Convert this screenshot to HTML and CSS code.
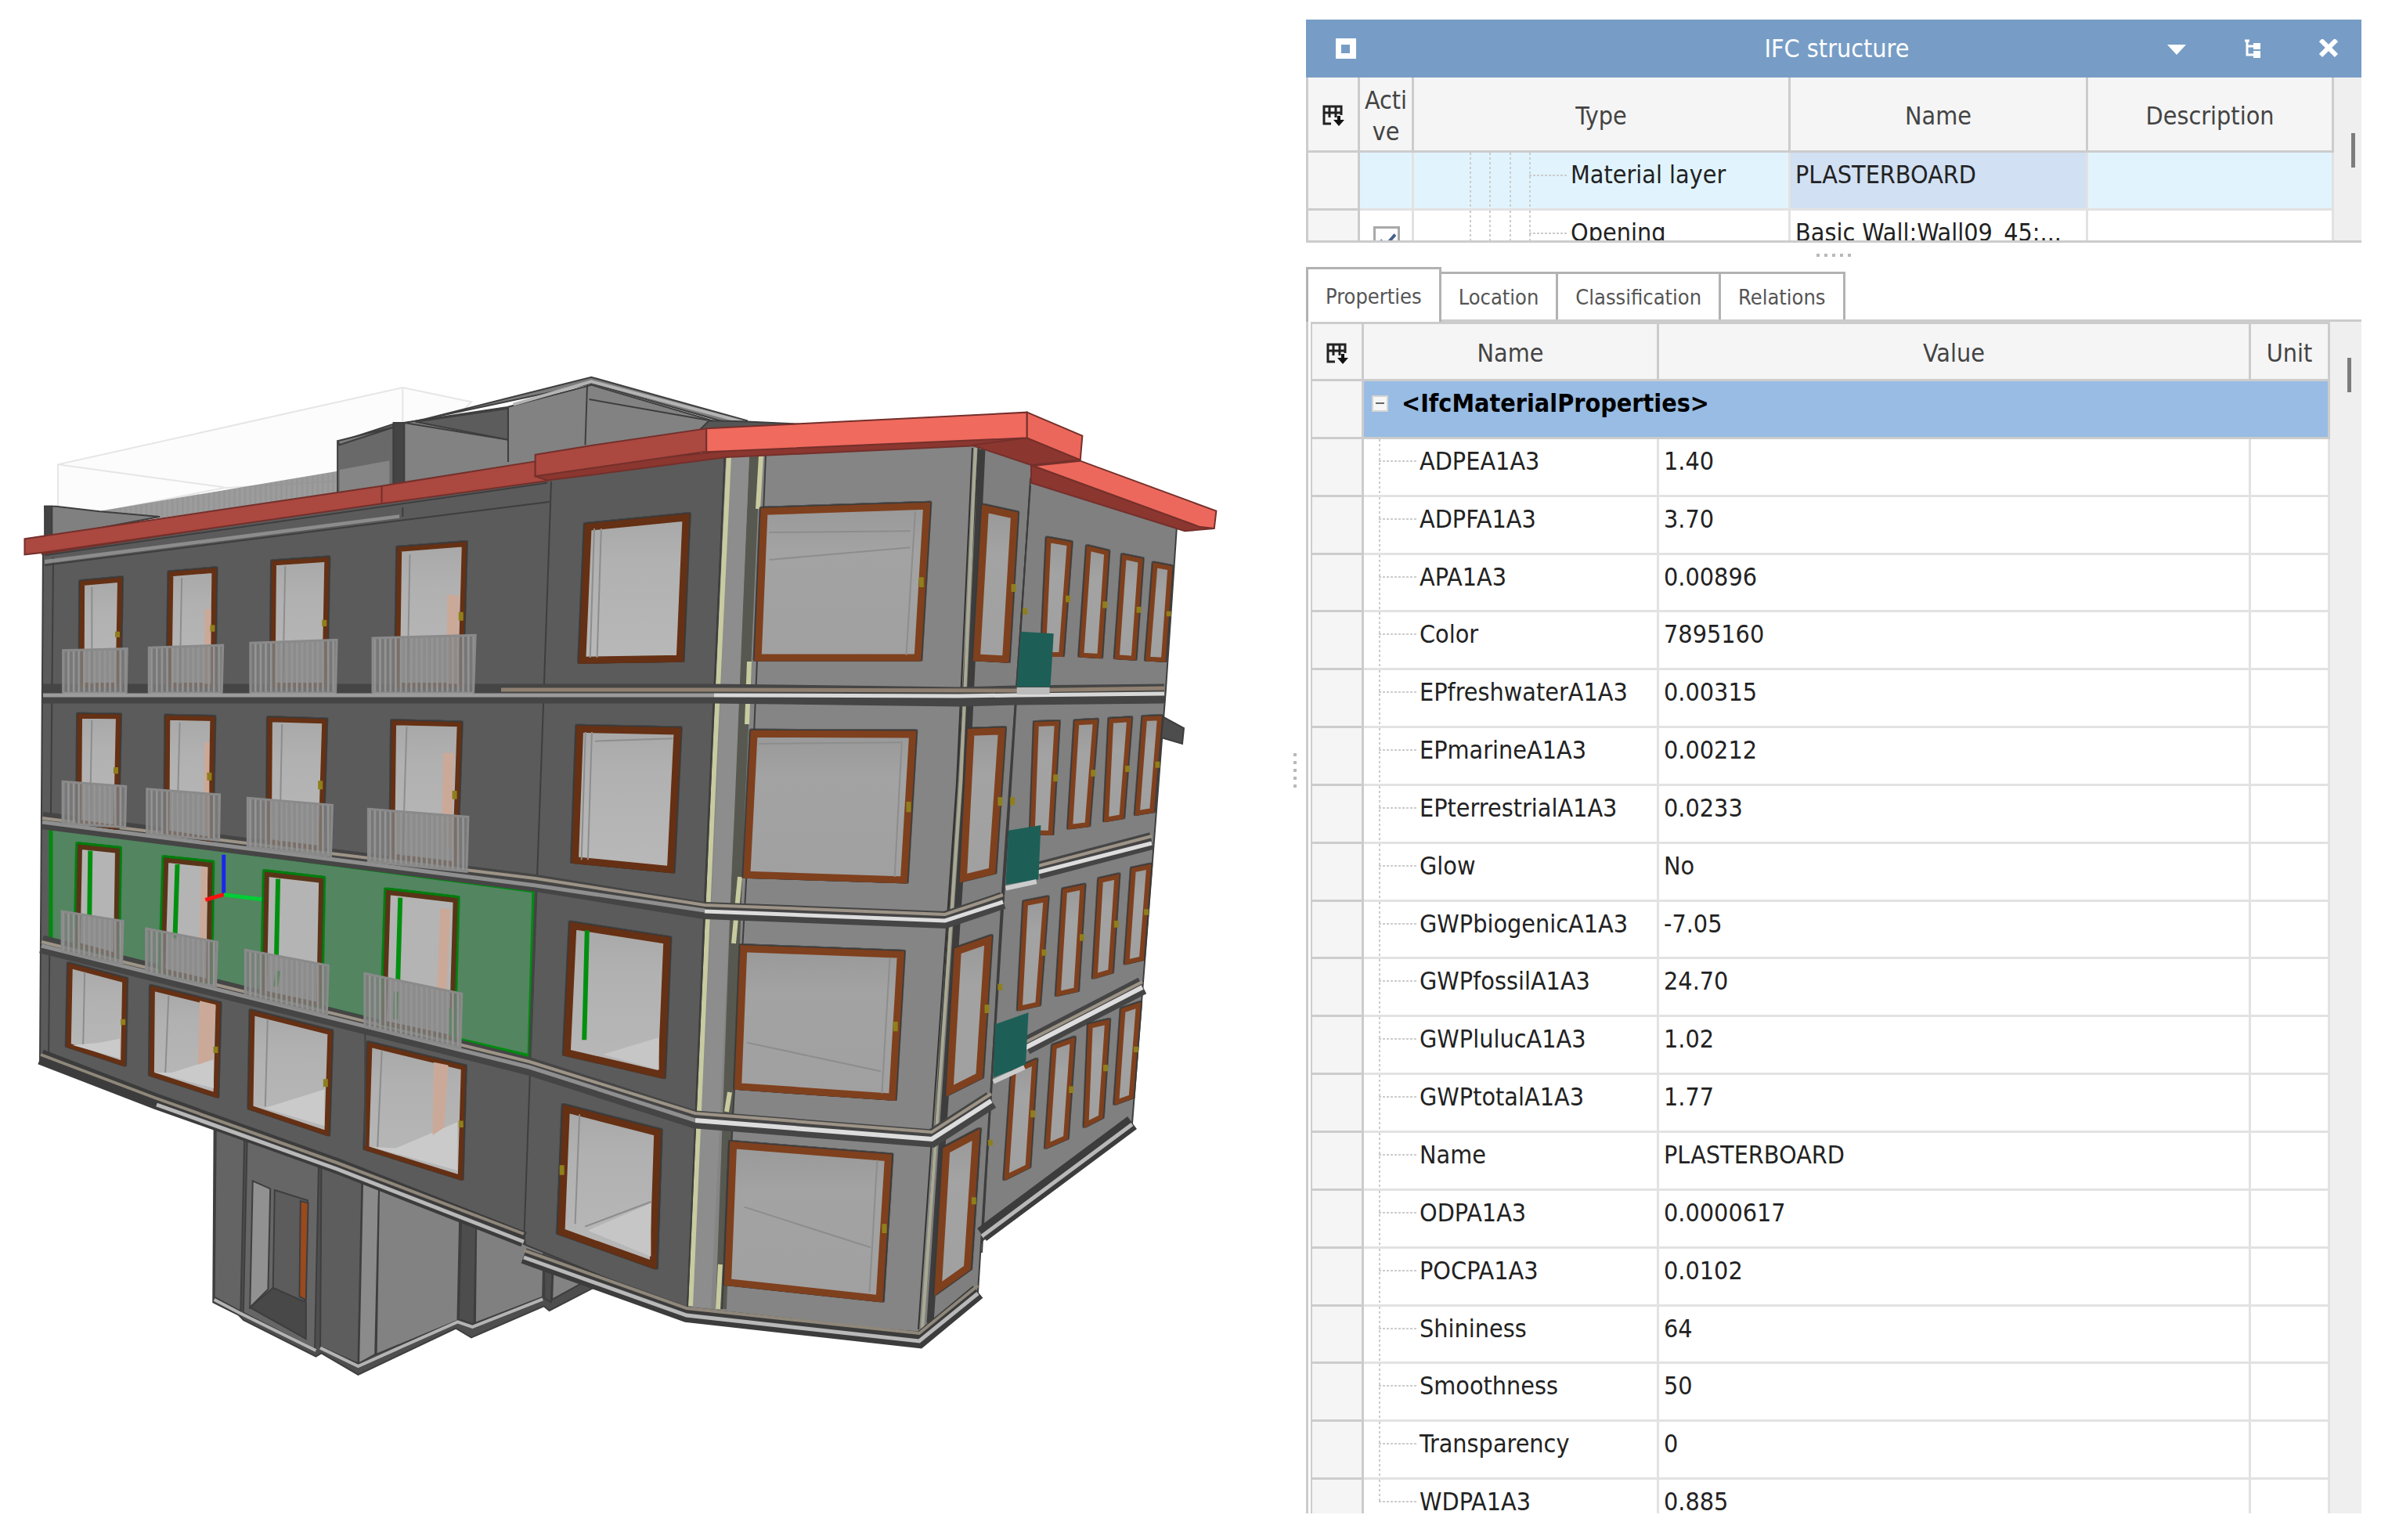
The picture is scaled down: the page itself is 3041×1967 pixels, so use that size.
FILE: index.html
```html
<!DOCTYPE html>
<html lang="en">
<head>
<meta charset="utf-8">
<title>IFC structure</title>
<link rel="stylesheet" href="styles.css">
</head>
<body>
<main class="app">
<section class="viewport" aria-label="3D model">
<svg class="model" viewBox="0 0 1640 1967" role="img" aria-label="Building model">
  <defs>
    <pattern id="bars" width="13" height="20" patternUnits="userSpaceOnUse"><rect width="13" height="20" fill="#808080" fill-opacity=".78"/><rect width="5" height="20" fill="#959595"/></pattern>
    <linearGradient id="glass" x1="0" y1="0" x2="0" y2="1"><stop offset="0" stop-color="#a8a8a8"/><stop offset=".3" stop-color="#b1b1b1"/><stop offset="1" stop-color="#b8b8b8"/></linearGradient>
    <linearGradient id="glass2" x1="0" y1="0" x2="0" y2="1"><stop offset="0" stop-color="#999"/><stop offset=".3" stop-color="#a3a3a3"/><stop offset="1" stop-color="#a0a0a0"/></linearGradient>
  </defs>

  <!-- entrance block -->
  <g class="edge" transform="translate(200 1380) scale(.7015 .3333)">
    <path fill="#4e4e4e" d="M105 170L103 850L150 900L158 918L290 1058L300 1045L367 1128L545 950L573 985L705 865L715 882L800 790L680 500L300 200Z"/>
    <path fill="#646464" d="M108 180L105 830L153 885L160 210Z"/>
    <path fill="#666" d="M165 215L158 890L288 1030L295 330Z"/>
    <path fill="#919191" d="M175 385L207 415L203 800L170 870Z"/>
    <path fill="#5c5c5c" d="M215 420L275 460L270 850L212 795Z"/>
    <path fill="#484848" d="M170 870L212 795L272 850L272 990Z"/>
    <path fill="#9a4a1c" d="M262 462L276 470L272 842L260 828Z"/>
    <path fill="#5d5d5d" d="M300 330L374 385L367 1085L298 1020Z"/>
    <path fill="#8b8b8b" d="M375 385L405 410L398 1050L368 1085Z"/>
    <path fill="#828282" d="M405 410L552 520L548 920L400 1050Z"/>
    <path fill="#4d4d4d" d="M555 520L582 540L578 935L550 915Z"/>
    <path fill="#808080" d="M582 545L705 640L703 830L580 930Z"/>
    <path fill="#4d4d4d" d="M706 700L721 720L718 850L706 835Z"/>
    <path fill="#838383" d="M722 720L785 765L720 840Z"/>
    <path class="thin" stroke="#aaa" d="M105 840L152 892L290 1035M298 1025L367 1095L548 925L575 945L703 838"/>
  </g>

  <!-- walls -->
  <g class="edge">
    <path fill="#5b5b5b" d="M55 700L694 610L708 600L926 578L900 1150L878 1675L671 1590L669 1575L51 1357Z"/>
    <path fill="#858585" d="M926 578L1250 568L1240 900L1178 1702L878 1675Z"/>
    <path fill="#7f7f7f" d="M1250 568L1318 592L1298 880L1249 1650L1178 1702Z"/>
    <path fill="#808080" d="M1316 612L1503 672L1489 880L1446 1435L1254 1585Z"/>
    <path fill="#4d4d4d" d="M1486 916L1512 930L1510 950L1483 942Z"/>
    <path d="M704 615L694 900L669 1590M68 712L62 1355M1316 620L1298 880L1280 1140L1254 1600"/>
  </g>
  <g fill="none">
    <path stroke="#575850" stroke-width="14" d="M964 582L944 1040L921 1672"/>
    <path stroke="#8d8d8d" stroke-width="24" d="M945 582L926 1040L896 1670"/>
    <path stroke="#c8cba0" stroke-width="6" d="M931 582L912 985L882 1668"/>
    <path stroke="#c8cba0" stroke-width="6" d="M972 582L968 650M957 845L954 925M945 1120L937 1205M932 1395L928 1420M920 1615L917 1672"/>
    <path stroke="#3f3f3f" stroke-width="2" d="M926 582L908 985L878 1668M978 582L961 985L922 1672"/>
    <path stroke="#3d3d3d" stroke-width="9" d="M1254 574L1234 1000L1188 1690"/>
    <path stroke="#a9a993" stroke-width="4" d="M1246 572L1227 1000L1178 1698"/>
    <path stroke="#333" stroke-width="2" d="M1242 572L1222 1000L1173 1698"/>
  </g>

  <!-- selected wall -->
  <path fill="#528560" stroke="#008b10" stroke-width="5" d="M65 1056L682 1138L676 1349L65 1206Z"/>
  <path stroke="#444" stroke-width="3" d="M685 1118L676 1365"/>

  <!-- cornices -->
  <g fill="none" class="bands">
    <path stroke="#454545" stroke-width="25" d="M55 886H910L1225 890L1298 888L1487 886"/>
    <path stroke="#8f8071" stroke-width="5" d="M640 881H912L1298 882L1487 879"/>
    <path stroke="#9c9c9c" stroke-width="5" d="M55 888H912"/>
    <path stroke="#d8d8d8" stroke-width="5" d="M912 888L1225 889L1298 888L1487 886"/>
    <path stroke="#454545" stroke-width="22" d="M54 1048L684 1128L900 1163L1207 1175L1281 1150M1326 1112L1471 1074"/>
    <path stroke="#9d9487" stroke-width="4" d="M54 1045L684 1122L900 1156L1207 1168L1281 1143M1326 1106L1471 1068"/>
    <path stroke="#8f8f8f" stroke-width="5" d="M54 1050L684 1131L900 1163"/>
    <path stroke="#ddd" stroke-width="5" d="M900 1164L1207 1176L1281 1152M1326 1114L1471 1077"/>
    <path stroke="#454545" stroke-width="23" d="M53 1206L676 1362L888 1430L1190 1454L1266 1405M1310 1336L1459 1259"/>
    <path stroke="#9d9487" stroke-width="4" d="M53 1203L676 1356L888 1422L1190 1446L1266 1397M1310 1331L1459 1254"/>
    <path stroke="#8f8f8f" stroke-width="5" d="M53 1208L676 1363L888 1431"/>
    <path stroke="#ddd" stroke-width="6" d="M888 1431L1190 1455L1266 1406M1310 1338L1459 1261"/>
    <path stroke="#3c3c3c" stroke-width="20" d="M52 1350L200 1407L430 1489L669 1583M669 1604L877 1679L1174 1712L1249 1650M1254 1577L1446 1434"/>
    <path stroke="#8f877a" stroke-width="4" d="M52 1347L200 1403L430 1485L669 1576M669 1597L877 1671L1174 1703L1249 1642"/>
    <path stroke="#b9b9b9" stroke-width="5" d="M200 1411L430 1493L669 1586M669 1606L877 1680L1174 1713L1249 1652M1254 1579L1446 1436"/>
  </g>
  <!-- roof structures -->
  <g class="edge" transform="translate(0 460) scale(.5102 .3333)">
    <path fill="#fcfcfc" stroke="#e6e6e6" d="M145 600V400L1008 105L1180 160L1000 450L560 490L260 580Z"/>
    <path fill="none" stroke="#e6e6e6" d="M145 400L560 487M1008 105V240"/>
    <path fill="url(#bars)" stroke="none" d="M250 578L845 425V510L400 605Z"/>
    <path fill="#808080" d="M112 560L140 560L250 580L400 600L120 680Z"/>
    <path fill="#444" d="M112 560H130V675H112Z"/>
    <path fill="#696969" d="M845 315L985 245V480L845 510Z"/>
    <path fill="#858585" stroke="none" d="M850 420L975 385V478L850 505Z"/>
    <path fill="#7c7c7c" d="M845 310L1480 65L1870 232L1870 262L1480 90L1020 240L850 325Z"/>
    <path fill="#828282" d="M1010 240L1270 180L1480 95L1850 262V300L1340 400L1010 480Z"/>
    <path fill="#5c5c5c" d="M1040 236L1272 185V305Z"/>
    <path fill="#444" d="M985 240H1012V475H985Z"/>
    <path fill="none" stroke="#4c4c4c" d="M1272 185V390M1470 95L1465 325M1475 150L1845 250M1012 240L1272 305"/>
    <path fill="none" class="thin" stroke="#c0c0c0" d="M1285 170L1480 82L1868 240"/>
    <path fill="#555" d="M1700 345L1775 232L1860 235L2000 245L1700 320Z"/>
    <path fill="#8c8c8c" stroke="none" d="M112 765L1000 592V605L112 780Z"/>
    <path fill="none" d="M112 786L1375 543M1008 565V600M112 748L1370 470"/>
  </g>
  <g class="roof" transform="translate(760 460) scale(.523 .3333)">
    <path fill="#8c3630" d="M-1352 743L-630 570L-140 465L0 438L320 372L930 328L1055 298L500 320L-200 430Z"/>
    <path fill="#ab4840" d="M-1393 685L-521 482L-146 388L-146 445L-114 462L-521 550L-1352 738L-1393 745Z"/>
    <path fill="#ab4840" d="M-146 362L0 325L272 262V350L0 412L-146 445Z"/>
    <path fill="#8c3630" d="M920 326L1055 298L1185 382L1065 402Z"/>
    <path fill="#8c3630" d="M1065 403L1475 630L1512 645L1440 655L1065 470Z"/>
    <path fill="#f06a5e" d="M272 262L1055 200V298L272 352Z"/>
    <path fill="#ec675b" d="M1055 200L1190 290L1185 382L1055 298Z"/>
    <path fill="#ed685c" d="M1070 405L1185 386L1517 578L1512 645L1475 638Z"/>
    <path fill="none" d="M-521 482V550"/>
  </g>

  <!-- top floor openings, street side -->
  <g transform="translate(0 460) scale(.5102 .3333)">
    <g class="win dark">
      <path d="M206 855L300 842L295 1245H205Z"/><path d="M428 820L536 806L532 1245H424Z"/>
      <path d="M686 778L818 764L812 1245H683Z"/><path d="M1000 725L1162 706L1152 1245H995Z"/>
    </g>
    <path class="jamb" d="M230 870V1240M455 835L450 1240M714 790L708 1240M1026 745L1020 1240"/>
    <path class="door" d="M513 955H528V1240H510ZM1120 900H1150L1146 1240H1118Z"/>
    <path class="bal" d="M158 1112L318 1106L316 1275H158ZM373 1102L558 1092L555 1275H373ZM627 1084L843 1072L840 1275H627ZM933 1065L1190 1054L1185 1275H933Z"/>
    <path class="knob" d="M294 1040V1062M532 1015V1040M812 995V1020M1154 965V998M1464 880V915"/>
    <path class="foot" d="M158 1280H316M373 1280H555M627 1280H840M933 1280H1185"/>
  </g>
  <!-- top floor openings, corner and side -->
  <g transform="translate(760 460) scale(.523 .3333)">
    <g class="win big dark"><path d="M-17 640L222 603L207 1144L-31 1150Z"/></g>
    <path class="jamb" d="M15 645L5 1140M-2 645L-12 1140"/>
    <g class="win big lit"><path d="M413 580L810 559L788 1140L398 1140Z"/><path d="M953 570L1024 594L1003 1146L932 1140Z"/></g>
    <path class="jamb" d="M425 660L770 655M425 765L770 718M782 580L760 1130"/>
    <g class="win lit"><path d="M1108 690L1158 704L1138 1128H1095Z"/><path d="M1206 722L1249 738L1232 1134L1188 1130Z"/><path d="M1292 755L1332 768L1315 1142L1275 1138Z"/><path d="M1368 786L1404 797L1388 1148L1350 1145Z"/></g>
    <path class="knob" d="M797 832V870M1022 858V888M1050 950V975M1155 902V928M1245 925V950M1328 945V968M1401 962V982"/>
    <path class="teal" d="M1040 1040L1120 1048L1112 1252H1030Z"/><path stroke="#bbb" stroke-width="9" d="M1030 1268H1110"/>
  </g>

  <!-- lower floors, street side -->
  <g transform="translate(0 940) scale(.5102 .3333)">
    <g class="win dark">
      <path d="M200 -76L296 -74L290 350L198 330Z"/><path d="M420 -70L532 -66L526 395L418 370Z"/>
      <path d="M676 -62L812 -56L802 430L674 405Z"/><path d="M986 -50L1150 -44L1138 490L982 460Z"/>
      <path d="M176 882L312 937L308 1255L172 1186Z"/><path d="M382 968L546 1030L540 1376L380 1296Z"/>
      <path d="M632 1062L826 1137L818 1522L628 1425Z"/><path d="M926 1184L1160 1272L1152 1692L918 1580Z"/>
    </g>
    <g class="win picked">
      <path d="M200 425L294 440L290 840L195 800Z"/><path d="M416 476L526 494L522 940L408 900Z"/>
      <path d="M668 530L804 554L798 1030L662 985Z"/><path d="M972 600L1140 630L1130 1155L962 1100Z"/>
    </g>
    <path class="jamb" d="M230 -60L225 330M450 -52L443 370M706 -45L700 405M1018 -35L1008 460M212 905L208 1190M422 995L414 1290M670 1085L664 1420M956 1205L945 1580"/>
    <path fill="#cacaca" d="M182 1185L250 1175L300 1160V1235ZM388 1290L430 1290L535 1240V1350ZM636 1415L664 1425L812 1355V1495ZM930 1575L990 1580L1145 1480V1665Z"/>
    <path class="door" d="M512 25H524V370H508ZM1110 65H1136L1130 430H1104ZM504 500L520 505L516 790H500ZM1102 660L1128 665L1118 980H1094ZM500 1015L540 1030L532 1240L495 1260ZM1086 1250L1122 1262L1112 1500L1083 1530Z"/>
    <path class="green" d="M226 440L224 690M444 492L438 775M696 548L692 840M1002 620L996 940M696 900L690 960M992 980L990 1085M1130 1045L1130 1150"/>
    <path class="bal" d="M157 175L315 193L313 350L157 335ZM368 203L550 225L548 400L368 375ZM620 238L832 265L828 460L620 425ZM922 280L1172 310L1168 520L922 480ZM155 672L308 710L305 875L155 825ZM366 738L544 790L540 962L366 905ZM614 820L822 880L818 1070L614 995ZM913 910L1156 988L1152 1195L913 1115Z"/>
    <path class="knob" d="M290 120V145M524 140V170M802 172V205M1138 210V242M1443 205V242M308 1085V1108M540 1190V1215M815 1315V1345M1154 1475V1500M1425 955V990"/>
    <g fill="none" stroke-width="5" class="axis"><path stroke="#1a26ee" d="M560 455V605"/><path stroke="#00cf35" d="M560 608L655 626"/><path stroke="#f11" d="M514 628L560 608"/></g>
    <path class="seam" d="M914 1130L914 1570"/>
  </g>

  <!-- lower floors, corner and side -->
  <g transform="translate(760 940) scale(.5102 .3333)">
    <g class="win big dark"><path d="M-38 -26L206 -18L189 512L-50 476Z"/><path d="M-55 728L180 784L166 1298L-70 1214Z"/></g>
    <path class="jamb" d="M-8 -15L-18 475M-24 -15L-34 475M0 20L195 10"/>
    <path class="green" d="M-20 745L-27 1165"/>
    <path fill="#c6c6c6" d="M20 1220L160 1155V1280Z"/>
    <g class="win big lit">
      <path d="M398 -8L795 -6L773 552L380 532Z"/><path d="M372 815L765 838L744 1384L358 1343Z"/>
      <path d="M941 -14L1018 -18L994 518L922 545Z"/><path d="M908 824L984 784L962 1303L888 1360Z"/>
    </g>
    <path class="jamb" d="M768 20L750 540M738 850L718 1370M380 1175L715 1285M410 30L770 25"/>
    <g class="win lit">
      <path d="M1105 -45L1156 -48L1140 372L1095 370Z"/><path d="M1206 -50L1252 -54L1232 340L1190 348Z"/><path d="M1292 -58L1337 -62L1318 310L1280 320Z"/><path d="M1376 -66L1413 -68L1394 286L1358 295Z"/>
      <path d="M1078 642L1128 627L1108 1028L1064 1043Z"/><path d="M1176 594L1220 580L1204 973L1160 988Z"/><path d="M1266 554L1306 540L1290 903L1252 920Z"/><path d="M1348 514L1386 502L1368 853L1332 866Z"/>
      <path d="M1048 1287L1100 1252L1083 1650L1030 1690Z"/><path d="M1150 1192L1195 1167L1178 1540L1133 1570Z"/><path d="M1240 1112L1282 1097L1266 1460L1230 1488Z"/><path d="M1322 1052L1360 1032L1342 1383L1306 1403Z"/>
    </g>
    <path class="knob" d="M785 252V292M1014 235V268M1045 235V265M1153 148V175M1247 130V155M1333 114V138M1408 98V122M1124 818V842M1219 760V785M1305 708V734M1380 664V686M1014 950V975M981 1030V1062M752 1095V1132M1192 1343V1368M1278 1260V1285M1354 1190V1212M1096 1435V1462"/>
    <path class="teal" d="M1035 362L1116 342L1110 550L1028 570ZM1002 1105L1085 1060L1078 1260L997 1310Z"/>
    <path stroke="#ccc" fill="none" stroke-width="6" d="M1028 584L1105 558M997 1325L1075 1270"/>
  </g>

  <!-- ground floor, corner -->
  <g transform="translate(200 1380) scale(.7015 .3333)">
    <g class="win big dark"><path d="M746 110L912 200L904 706L737 580Z"/></g>
    <path class="jamb" d="M770 130L762 550M780 560L900 465"/>
    <path fill="#c6c6c6" d="M785 575L900 470V675Z"/>
    <g class="win big lit"><path d="M1050 248L1332 296L1316 836L1040 773Z"/><path d="M1438 268L1492 208L1476 718L1423 798Z"/></g>
    <path class="jamb" d="M1070 485L1300 640M1312 305L1298 810"/>
    <path class="knob" d="M738 325V362M1325 550V585M1488 448V475M1518 228V250"/>
  </g>
</svg>
</section>

<div class="grip grip-v" role="separator" aria-orientation="vertical"><i></i><i></i><i></i><i></i><i></i></div>

<section class="panel" aria-label="IFC structure">
  <header class="titlebar">
    <button class="tool" type="button" aria-label="Window"><svg viewBox="0 0 26 26" width="26" height="26"><path fill="#fff" fill-rule="evenodd" d="M0 0H26V26H0ZM7 8V19H18V8Z"/></svg></button>
    <h1>IFC structure</h1>
    <div class="tools">
      <button class="tool" type="button" aria-label="Menu"><svg viewBox="0 0 24 24" width="24" height="24"><path fill="#fff" d="M0 7H24L12 20Z"/></svg></button>
      <button class="tool" type="button" aria-label="Tree"><svg viewBox="0 0 24 24" width="24" height="24"><path fill="none" stroke="#fff" stroke-width="3" d="M2 2H8M5 2V20H14M5 9H14"/><path fill="#fff" d="M13 5H22V13H13ZM13 15H22V24H13Z"/></svg></button>
      <button class="tool" type="button" aria-label="Close"><svg viewBox="0 0 24 24" width="24" height="24"><path stroke="#fff" stroke-width="6" d="M2 1L22 21M22 1L2 21"/></svg></button>
    </div>
  </header>

  <div class="pane structure">
    <table class="grid">
      <colgroup><col class="c-mark"><col class="c-active"><col class="c-type"><col class="c-name"><col></colgroup>
      <thead><tr>
        <th><button class="chooser" type="button" aria-label="Choose columns"><svg viewBox="0 0 28 29" width="28" height="29"><path fill="none" stroke="#222" stroke-width="3" d="M11 25H2V3H24V14M2 11H24M9 3V17M17 3V17"/><path fill="#111" d="M14 20H28L21 28ZM19 15H23V21H19Z"/></svg></button></th>
        <th>Acti<br>ve</th><th>Type</th><th>Name</th><th>Description</th>
      </tr></thead>
      <tbody>
        <tr class="current"><td class="mark"></td><td></td><td class="deep">Material layer</td><td class="focus">PLASTERBOARD</td><td></td></tr>
        <tr><td class="mark"></td><td class="tick"><input type="checkbox" aria-label="Active" checked></td><td class="deep">Opening</td><td>Basic Wall:Wall09_45:...</td><td></td></tr>
      </tbody>
    </table>
    <div class="scroll"><span class="thumb"></span></div>
  </div>

  <div class="grip grip-h" role="separator"><i></i><i></i><i></i><i></i><i></i></div>

  <div class="tabs" role="tablist">
    <button type="button" role="tab" aria-selected="true" class="tab on">Properties</button>
    <button type="button" role="tab" aria-selected="false" class="tab">Location</button>
    <button type="button" role="tab" aria-selected="false" class="tab">Classification</button>
    <button type="button" role="tab" aria-selected="false" class="tab">Relations</button>
  </div>

  <div class="pane props">
    <div class="clip">
    <table class="grid">
      <colgroup><col class="c-mark"><col class="c-prop"><col><col class="c-unit"></colgroup>
      <thead><tr>
        <th><button class="chooser" type="button" aria-label="Choose columns"><svg viewBox="0 0 28 29" width="28" height="29"><path fill="none" stroke="#222" stroke-width="3" d="M11 25H2V3H24V14M2 11H24M9 3V17M17 3V17"/><path fill="#111" d="M14 20H28L21 28ZM19 15H23V21H19Z"/></svg></button></th>
        <th>Name</th><th>Value</th><th>Unit</th>
      </tr></thead>
      <tbody>
        <tr class="group"><td class="mark"></td><td colspan="3"><div class="group-name"><button class="fold" type="button" aria-label="Collapse"></button>&lt;IfcMaterialProperties&gt;</div></td></tr>
        <tr><td class="mark"></td><td class="leaf">ADPEA1A3</td><td>1.40</td><td></td></tr>
        <tr><td class="mark"></td><td class="leaf">ADPFA1A3</td><td>3.70</td><td></td></tr>
        <tr><td class="mark"></td><td class="leaf">APA1A3</td><td>0.00896</td><td></td></tr>
        <tr><td class="mark"></td><td class="leaf">Color</td><td>7895160</td><td></td></tr>
        <tr><td class="mark"></td><td class="leaf">EPfreshwaterA1A3</td><td>0.00315</td><td></td></tr>
        <tr><td class="mark"></td><td class="leaf">EPmarineA1A3</td><td>0.00212</td><td></td></tr>
        <tr><td class="mark"></td><td class="leaf">EPterrestrialA1A3</td><td>0.0233</td><td></td></tr>
        <tr><td class="mark"></td><td class="leaf">Glow</td><td>No</td><td></td></tr>
        <tr><td class="mark"></td><td class="leaf">GWPbiogenicA1A3</td><td>-7.05</td><td></td></tr>
        <tr><td class="mark"></td><td class="leaf">GWPfossilA1A3</td><td>24.70</td><td></td></tr>
        <tr><td class="mark"></td><td class="leaf">GWPlulucA1A3</td><td>1.02</td><td></td></tr>
        <tr><td class="mark"></td><td class="leaf">GWPtotalA1A3</td><td>1.77</td><td></td></tr>
        <tr><td class="mark"></td><td class="leaf">Name</td><td>PLASTERBOARD</td><td></td></tr>
        <tr><td class="mark"></td><td class="leaf">ODPA1A3</td><td>0.0000617</td><td></td></tr>
        <tr><td class="mark"></td><td class="leaf">POCPA1A3</td><td>0.0102</td><td></td></tr>
        <tr><td class="mark"></td><td class="leaf">Shininess</td><td>64</td><td></td></tr>
        <tr><td class="mark"></td><td class="leaf">Smoothness</td><td>50</td><td></td></tr>
        <tr><td class="mark"></td><td class="leaf">Transparency</td><td>0</td><td></td></tr>
        <tr><td class="mark"></td><td class="leaf last">WDPA1A3</td><td>0.885</td><td></td></tr>
      </tbody>
    </table>
    </div>
    <div class="scroll"><span class="thumb"></span></div>
  </div>
</section>
</main>
</body>
</html>
```
FILE: styles.css
```css
* { box-sizing: border-box; }
body {
  margin: 0;
  background: #fff;
  color: #222;
  font: 32px/40px "DejaVu Sans Condensed", "DejaVu Sans", "Noto Sans", sans-serif;
}
button { font: inherit; color: inherit; border: 0; padding: 0; background: none; }

.app {
  display: grid;
  grid-template-columns: minmax(0, 1640fr) 28px minmax(0, 1348fr);
  height: 100vh;
  padding-right: 25px;
}
.viewport { min-height: 0; }
.model { display: block; width: 100%; height: 100%; }

/* model drawing */
.model path { vector-effect: non-scaling-stroke; }
.edge path { stroke: #3e3e3e; stroke-width: 2px; }
.edge > path:not([fill]) { fill: none; }
.edge .thin { fill: none; stroke: #b4b4b4; stroke-width: 4px; }
.edge path[stroke="#e6e6e6"] { stroke: #e6e6e6; }
.edge path[stroke="none"] { stroke: none; }
.roof path { stroke: #74302b; stroke-width: 2px; }
.win path {
  stroke-width: 6px;
  filter: drop-shadow(3px 0 0 #3a3a3a) drop-shadow(-3px 0 0 #3a3a3a) drop-shadow(0 -5px 0 #3a3a3a);
}
.win.big path { stroke-width: 9px; }
.dark path { fill: url(#glass); stroke: #653014; }
.lit path { fill: url(#glass2); stroke: #7f401e; }
.win.picked path {
  fill: #b4b4b4;
  stroke: #5a3418;
  filter: drop-shadow(5px 0 0 #007d0e) drop-shadow(-5px 0 0 #007d0e) drop-shadow(0 -9px 0 #007d0e);
}
.jamb { fill: none; stroke: #8d8d8d; stroke-width: 2px; }
.seam { stroke: #444; stroke-width: 2px; }
.door { fill: #cba999; }
.bal { fill: url(#bars); stroke: #8a8a8a; stroke-width: 3px; }
.foot { stroke: #9a9a9a; stroke-width: 3px; }
.knob { fill: none; stroke: #8f7f1c; stroke-width: 6px; }
.teal { fill: #1d5f56; }
.green { fill: none; stroke: #00900f; stroke-width: 6px; }

/* splitter grips */
.grip { display: flex; align-items: center; justify-content: center; gap: 6px; }
.grip i { width: 4px; height: 4px; background: #b9b9b9; }
.grip-v { flex-direction: column; }
.grip-h { height: 31px; }

/* panel */
.panel { display: flex; flex-direction: column; min-height: 0; padding: 25px 0 34px; }
.titlebar {
  display: grid;
  grid-template-columns: 1fr auto 1fr;
  align-items: center;
  height: 74px;
  padding: 0 30px 0 38px;
  background: #779dc6;
  color: #fff;
}
.titlebar h1 { margin: 0; font-size: 32px; font-weight: 400; }
.tool { display: flex; justify-self: start; }
.tools { display: flex; justify-content: flex-end; gap: 73px; }

.pane { display: flex; border-left: 3px solid #ccc; }
.structure { height: 211px; flex: none; overflow: hidden; border-bottom: 3px solid #ccc; }
.scroll { flex: none; width: 35px; background: #efefef; display: flex; justify-content: center; }
.thumb { width: 5px; height: 44px; margin: 71px 0 0 14px; background: #7c7c7c; }
.props .scroll { width: 40px; }
.props .thumb { margin: 46px 0 0 8px; }

.grid { flex: 1; width: 100%; table-layout: fixed; border-spacing: 0; }
.grid th, .grid td { border-right: 3px solid #e2e2e2; border-bottom: 3px solid #e2e2e2; }
.grid th {
  padding: 4px 0 0;
  height: 96px;
  font-weight: 400;
  color: #444;
  background: #f5f5f5;
  border-color: #ccc;
}
.grid td { height: 74px; padding: 8px 0 0 6px; vertical-align: top; white-space: nowrap; overflow: hidden; }
.grid .mark { background: #f5f5f5; border-color: #ccc; }
.c-mark { width: 66px; }
.c-active { width: 69px; }
.c-type { width: 481px; }
.c-name { width: 380px; }
.c-prop { width: 377px; }
.c-unit { width: 101px; }
.chooser { display: block; margin: 0 auto; }
.chooser svg { display: block; }

.current td { background-color: #e1f4fe; }
.current .focus { background: #d1e0f3; }
.grid .deep {
  padding-left: 200px;
  background-repeat: no-repeat;
  background-image:
    repeating-linear-gradient(to bottom, #ccc 0 3px, transparent 3px 6px),
    repeating-linear-gradient(to bottom, #ccc 0 3px, transparent 3px 6px),
    repeating-linear-gradient(to bottom, #ccc 0 3px, transparent 3px 6px),
    repeating-linear-gradient(to bottom, #ccc 0 3px, transparent 3px 6px),
    repeating-linear-gradient(to right, #ccc 0 3px, transparent 3px 5px);
  background-size: 2px 100%, 2px 100%, 2px 100%, 2px 100%, 50px 2px;
  background-position: 71px 0, 96px 0, 122px 0, 147px 0, 147px 28px;
}
.grid .tick { padding: 20px 0 0 17px; line-height: 0; }
.tick input { appearance: none; width: 34px; height: 34px; margin: 0; border: 3px solid #a9a9a9; background: #fff; }
.tick input::before {
  content: "";
  display: block;
  width: 28px;
  height: 28px;
  background: #44618c;
  clip-path: polygon(14% 60%, 26% 48%, 44% 68%, 84% 22%, 94% 32%, 44% 90%);
}

/* tabs */
.tabs { display: flex; align-items: flex-end; height: 70px; border-bottom: 3px solid #ccc; }
.tab {
  height: 61px;
  padding: 2px 22px 0;
  border: 3px solid #b2b2b2;
  border-left-width: 0;
  border-bottom: 0;
  background: #fff;
  color: #555;
  font-size: 27px;
}
.tab.on { align-self: stretch; height: auto; margin-bottom: -3px; border-left-width: 3px; }

/* properties grid */
.props { flex: 1; min-height: 0; padding-left: 3px; border-left-color: #ccc; }
.clip { flex: 1; min-width: 0; overflow: hidden; border-left: 2px solid #ccc; border-top: 3px solid #ccc; }
.clip .grid { height: 1550px; }
.clip th { height: 73px; }
.clip td { height: 73px; }
.group td { border-color: #ccc; }
.group td + td { background: #98bce3; font-weight: 700; color: #000; }
.group-name { display: flex; align-items: center; gap: 17px; padding-left: 4px; }
.fold {
  width: 21px;
  height: 21px;
  background: linear-gradient(#666, #666) center / 11px 2px no-repeat #f6f6f6;
  border: 2px solid #d5d5d5;
}
.grid .leaf {
  padding-left: 71px;
  background-repeat: no-repeat;
  background-image:
    repeating-linear-gradient(to bottom, #ccc 0 3px, transparent 3px 6px),
    repeating-linear-gradient(to right, #ccc 0 3px, transparent 3px 5px);
  background-size: 2px 100%, 50px 2px;
  background-position: 19px 0, 19px 27px;
}
.grid .leaf.last { background-size: 2px 28px, 50px 2px; }
```
